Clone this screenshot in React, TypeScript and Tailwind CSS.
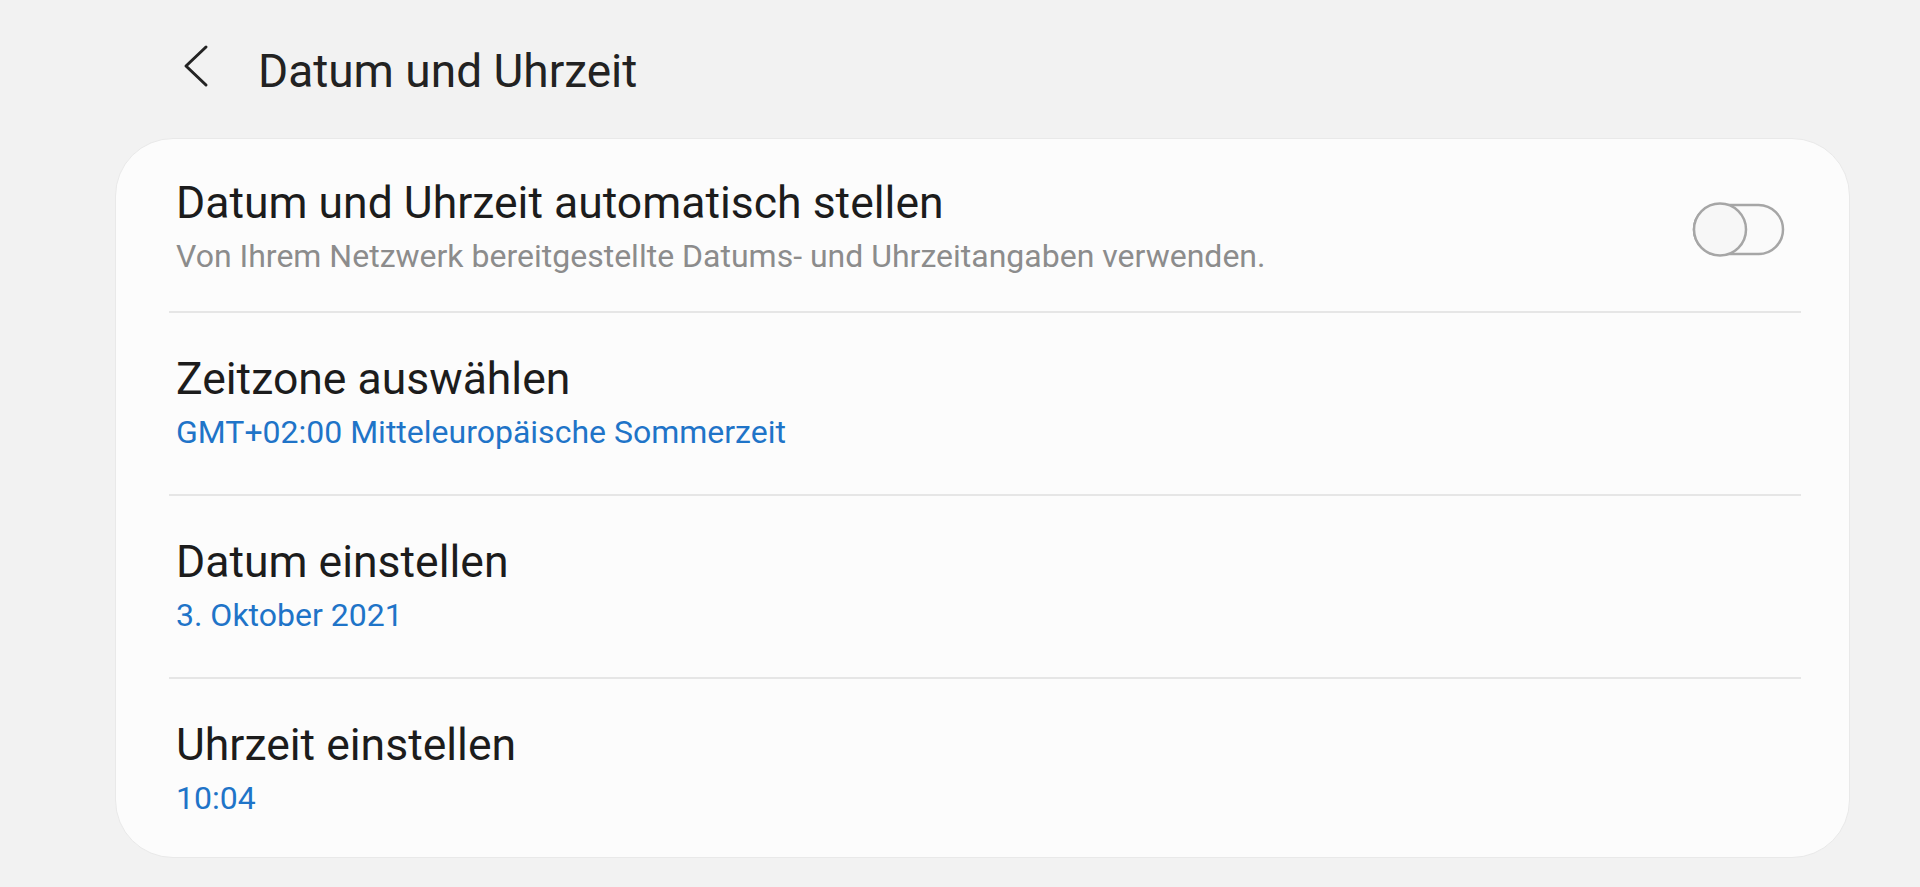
import React from "react";

function Chevron() {
  return (
    <svg width="28" height="44" viewBox="0 0 28 44" className="shrink-0">
      <polyline points="23,3 3,22 23,41" fill="none" stroke="#232323" strokeWidth="3" strokeLinecap="round" strokeLinejoin="round" />
    </svg>
  );
}

function Toggle() {
  return (
    <svg width="94" height="56" viewBox="0 0 94 56" className="shrink-0">
      <rect x="3" y="4" width="89" height="49" rx="24.5" fill="#fafafa" stroke="#a6a6a6" strokeWidth="2.5" />
      <circle cx="29" cy="28.5" r="26" fill="#f7f7f7" stroke="#a6a6a6" strokeWidth="2.5" />
    </svg>
  );
}

function Divider() {
  return <div className="h-[2px] bg-[#e6e6e6] ml-[53px] mr-[48px]" />;
}

function Row({ title, sub, blue, className }: { title: string; sub: string; blue?: boolean; className: string }) {
  return (
    <div className={"pl-[60px] " + className}>
      <div className="text-[44.5px] leading-[52px] text-[#1c1c1c]">{title}</div>
      <div className={"mt-[8px] text-[32px] leading-[38px] " + (blue ? "text-[#1f74c8]" : "text-[#8c8c8c]")}>{sub}</div>
    </div>
  );
}

export default function App() {
  return (
    <div className="w-full h-[887px] bg-[#f2f2f2] overflow-hidden" style={{ fontFamily: "Roboto, 'Noto Sans', sans-serif" }}>
      <div className="h-[138px] flex items-start pt-[44px] pl-[183px]">
        <Chevron />
        <div className="ml-[47px] -mt-[1px] text-[46px] leading-[56px] text-[#222222]">Datum und Uhrzeit</div>
      </div>
      <div className="ml-[115px] w-[1735px] h-[720px] rounded-[58px] bg-[#fcfcfc] border border-[#e9e9e9] overflow-hidden">
        <div className="flex justify-between items-start h-[172px]">
          <Row title="Datum und Uhrzeit automatisch stellen" sub="Von Ihrem Netzwerk bereitgestellte Datums- und Uhrzeitangaben verwenden." className="pt-[38px]" />
          <div className="mt-[62px] mr-[64px]">
            <Toggle />
          </div>
        </div>
        <Divider />
        <div className="h-[181px]">
          <Row title="Zeitzone auswählen" sub="GMT+02:00 Mitteleuropäische Sommerzeit" blue className="pt-[40px]" />
        </div>
        <Divider />
        <div className="h-[181px]">
          <Row title="Datum einstellen" sub="3. Oktober 2021" blue className="pt-[40px]" />
        </div>
        <Divider />
        <div className="h-[180px]">
          <Row title="Uhrzeit einstellen" sub="10:04" blue className="pt-[40px]" />
        </div>
      </div>
    </div>
  );
}
